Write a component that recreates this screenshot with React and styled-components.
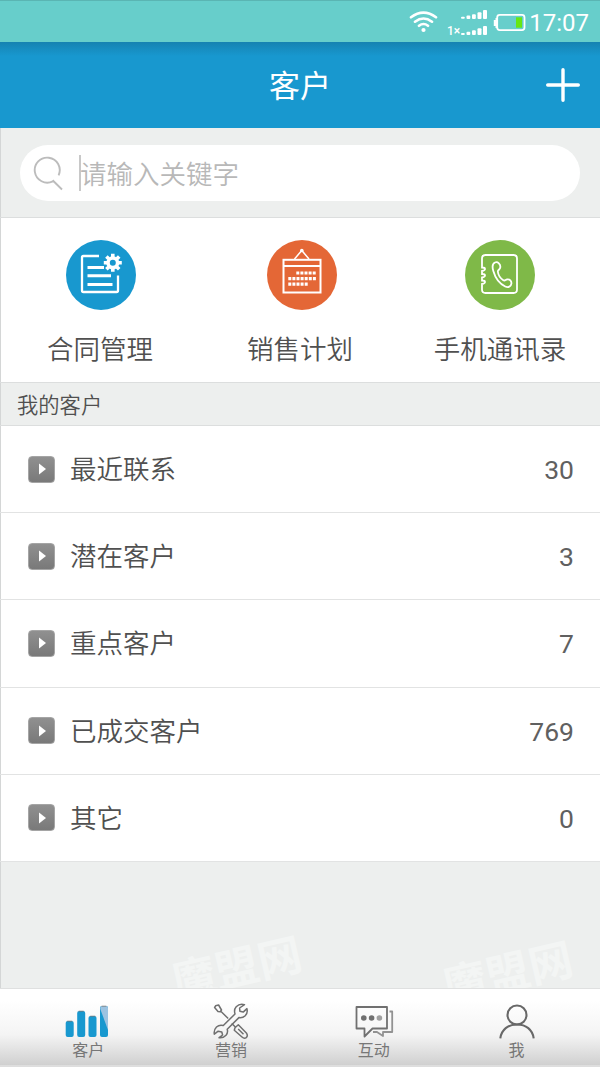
import styled, { createGlobalStyle } from 'styled-components'

const actions = [
  { label: '合同管理', color: '#1898cf', shift: 1, icon: <ContractIcon /> },
  { label: '销售计划', color: '#e46736', shift: 2, icon: <PlanIcon /> },
  { label: '手机通讯录', color: '#7fb948', shift: 0, icon: <ContactsIcon /> },
]

const groups = [
  { label: '最近联系', count: 30 },
  { label: '潜在客户', count: 3 },
  { label: '重点客户', count: 7 },
  { label: '已成交客户', count: 769 },
  { label: '其它', count: 0 },
]

const tabs = [
  { label: '客户', icon: <BarsIcon /> },
  { label: '营销', icon: <ToolsIcon /> },
  { label: '互动', icon: <ChatIcon /> },
  { label: '我', icon: <PersonIcon /> },
]

function ContractIcon() {
  return (
    <svg width="70" height="70" viewBox="0 0 70 70" fill="none" stroke="#fff" strokeWidth="2.3">
      <path d="M33 16H17.5Q16 16 16 17.5V50.5Q16 52 17.5 52H50.5Q52 52 52 50.5V35.5" />
      <path d="M21.5 27.5H38M21.5 35.7H45M21.5 44.5H46.5" strokeWidth="3" />
      <circle cx="46.8" cy="22.8" r="4.8" strokeWidth="3.6" />
      <path
        d="M46.8 13.8V17M46.8 28.6V31.8M37.8 22.8H41M52.6 22.8H55.8M40.4 16.4L42.7 18.7M50.9 26.9L53.2 29.2M53.2 16.4L50.9 18.7M42.7 26.9L40.4 29.2"
        strokeWidth="3.6"
      />
    </svg>
  )
}

function PlanIcon() {
  return (
    <svg width="70" height="70" viewBox="0 0 70 70" fill="none" stroke="#fff" strokeWidth="2">
      <rect x="16.5" y="19.8" width="37" height="32.7" />
      <path d="M16.5 26H53.5" />
      <path d="M27.5 19L34.8 10.5L42 19" strokeWidth="1.5" />
      <circle cx="34.8" cy="10.5" r="1.8" fill="#fff" stroke="none" />
      <path d="M29.3 33H49M21.3 38.7H49M21.3 44.2H41" strokeWidth="3.2" strokeDasharray="3 1.1" />
    </svg>
  )
}

function ContactsIcon() {
  return (
    <svg width="70" height="70" viewBox="0 0 70 70" fill="none" stroke="#fff" strokeWidth="1.8" strokeLinecap="round">
      <path d="M17 24.5V18.5Q17 15 20.5 15H48.5Q52 15 52 18.5V49.5Q52 53 48.5 53H20.5Q17 53 17 49.5V44Q20 43.5 20 42Q20 40.5 17 40.5V37.5Q20 37 20 35.5Q20 34 17 34V31Q20 30.5 20 29Q20 27.5 17 27.5Z" />
      <path d="M30 22.5C27.7 23.5 27 26.8 28.4 31.3C30.2 37.6 34.5 43.7 40.2 46.5C43.4 48 46 46.4 46.4 43.6C46.7 41.1 44.7 38.8 42.2 39.4C40.4 39.8 40 41.2 38.3 40.2C35.3 38.3 33.2 34.6 32.8 31.5C32.7 30 35 29.5 35.3 27.3C35.7 24.2 32.8 21.3 30 22.5Z" />
    </svg>
  )
}

function BarsIcon() {
  return (
    <svg width="46" height="36" viewBox="0 -1 46 36" fill="#1898cf">
      <rect x="0.7" y="17" width="8" height="16" rx="2" />
      <rect x="12.2" y="7" width="8" height="26" rx="2" />
      <rect x="23.5" y="12" width="8" height="21" rx="2" />
      <rect x="35" y="2" width="8" height="31" rx="2" />
      <path d="M36.8 2H41.3Q43 2 43 4V26L35.3 5Q35 2 36.8 2Z" fill="#9cc3e1" />
      <path d="M2.2 17.2H7.2M13.7 7.2H18.7M25.2 12.2H30.2M36.6 2.2H41.3" stroke="#777" strokeWidth=".8" />
    </svg>
  )
}

function ToolsIcon() {
  return (
    <svg width="36" height="36" viewBox="0 0 36 36" fill="none" stroke="#707070" strokeWidth="1.5" strokeLinejoin="round">
      <path d="M2.6 2.8L5.6 2L8.5 7L7.2 8.8L5 8.5L1.6 4.5ZM7.8 8.2L15.2 15.5" />
      <path d="M18.7 20.5L22.1 23.8M22 24.7L25.3 21.8L33.6 30.3Q35.2 33 33.2 34.6Q31.2 36 29 34L21.3 27.3ZM25.2 26L30.5 31.3" />
      <path d="M31.5 1.7Q26.7 .2 23.2 3.7Q20.7 6.5 22 11L10.3 22.5Q6.5 21.3 3.5 24Q.6 26.9 1.3 31.2L5.2 28.2L8.8 29L9.6 32L6.1 34.7Q10.3 35.3 13 32.3Q15.3 29.6 14.2 26.2L25.9 14.6Q29.6 15.2 32.2 12.7Q35.1 9.7 33.9 5.6L30.2 9.1L26.9 8.3L26.6 5Z" />
    </svg>
  )
}

function ChatIcon() {
  return (
    <svg width="40" height="36" viewBox="0 0 40 36" fill="none" stroke="#707070" strokeWidth="1.8" strokeLinejoin="round">
      <path d="M2.5 4H33V25.5H18.5L10.5 33.5V25.5H2.5Z" />
      <path d="M35.5 8.5H38.2V29H29V33L23 29H19" stroke="#929292" />
      <g fill="#707070" stroke="none">
        <circle cx="9.8" cy="15" r="2.8" />
        <circle cx="17.6" cy="15" r="2.8" />
        <circle cx="25.4" cy="15" r="2.8" opacity=".65" />
      </g>
    </svg>
  )
}

function PersonIcon() {
  return (
    <svg width="36" height="36" viewBox="0 0 36 36" fill="none" stroke="#686868" strokeWidth="2.1">
      <circle cx="18" cy="12" r="9.5" />
      <path d="M1.3 35.3C2.5 26.5 9 21.5 18 21.5S33.5 26.5 34.7 35.3" />
    </svg>
  )
}

function StatusIcons() {
  return (
    <svg width="118" height="30" viewBox="408 8 118 30" fill="none" stroke="#fff">
      <g strokeWidth="2.6" strokeLinecap="round">
        <path d="M411 17.3Q423.5 8 436 17.3M415 21.7Q423.5 15.3 432 21.7M419 25.8Q423.5 22.2 428 25.8" />
      </g>
      <g fill="#fff" stroke="none">
        <circle cx="423.5" cy="30" r="2.1" />
        <rect x="461" y="16.8" width="3.8" height="2" rx="1" />
        <rect x="466.5" y="15.5" width="3.8" height="3.5" rx="1" />
        <rect x="472" y="14.2" width="3.8" height="4.8" rx="1" />
        <rect x="477.5" y="12.3" width="4" height="6.7" rx="1" />
        <rect x="483" y="10" width="4" height="9" rx="1" />
        <rect x="461" y="33" width="3.8" height="2" rx="1" />
        <rect x="466.5" y="31.7" width="3.8" height="3.3" rx="1" />
        <rect x="472" y="30.2" width="3.8" height="4.8" rx="1" />
        <rect x="477.5" y="28.3" width="4" height="6.7" rx="1" />
        <rect x="483" y="26" width="4" height="9" rx="1" />
        <path d="M497 18H495.5V20H493.8V26H495.5V28H497Z" />
      </g>
      <rect x="497.2" y="14.9" width="27.3" height="15.2" rx="2.5" strokeWidth="1.8" />
      <rect x="516" y="17.3" width="6" height="10.4" fill="#67e712" stroke="none" />
    </svg>
  )
}

function App() {
  return (
    <Screen>
      <GlobalStyle />
      <StatusBar>
        <StatusIcons />
        <Network>1×</Network>
        <Time>17:07</Time>
      </StatusBar>
      <Header>
        <Title>客户</Title>
        <AddButton aria-label="添加">
          <svg width="34" height="34" viewBox="0 0 34 34" stroke="#fff" strokeWidth="3.4" strokeLinecap="round">
            <path d="M17 1.7V32.3M1.7 17H32.3" />
          </svg>
        </AddButton>
      </Header>
      <SearchArea>
        <SearchBox>
          <svg width="30" height="36" viewBox="0 0 30 36" fill="none" stroke="#bcbcbc" strokeWidth="1.9">
            <path d="M19.8 26.3A12.5 12.5 0 1 1 25.6 20.3M19.6 25.3L29 34.5" />
          </svg>
          <Caret />
          <Placeholder>请输入关键字</Placeholder>
        </SearchBox>
      </SearchArea>
      <Actions>
        {actions.map((item) => (
          <Action key={item.label}>
            <Disc color={item.color} $shift={item.shift}>{item.icon}</Disc>
            <ActionLabel>{item.label}</ActionLabel>
          </Action>
        ))}
      </Actions>
      <SectionTitle>我的客户</SectionTitle>
      <List>
        {groups.map((item) => (
          <Row key={item.label}>
            <Toggle>
              <svg width="9" height="12" viewBox="0 0 9 12">
                <path d="M1 .5L8 6L1 11.5Z" fill="#fff" />
              </svg>
            </Toggle>
            <RowLabel>{item.label}</RowLabel>
            <Count>{item.count}</Count>
          </Row>
        ))}
      </List>
      <Filler>
        <Watermark $left={170} $top={73}>魔盟网</Watermark>
        <Watermark $left={441} $top={78}>魔盟网</Watermark>
      </Filler>
      <TabBar>
        {tabs.map((item) => (
          <Tab key={item.label}>
            {item.icon}
            <TabLabel>{item.label}</TabLabel>
          </Tab>
        ))}
      </TabBar>
    </Screen>
  )
}

export default App

const GlobalStyle = createGlobalStyle`
  * {
    box-sizing: border-box;
  }

  body {
    margin: 0;
    background: #edefee;
    font-family: "Noto Sans CJK SC", sans-serif;
    font-weight: 350;
    color: #505050;
  }

  svg {
    display: block;
    flex-shrink: 0;
  }
`

const Screen = styled.div`
  width: 600px;
  height: 1067px;
  display: flex;
  flex-direction: column;
  overflow: hidden;
  background: #edefee;
  box-shadow: inset 1px 0 #d4d6d6;
`

const StatusBar = styled.div`
  height: 42px;
  flex-shrink: 0;
  display: flex;
  align-items: center;
  justify-content: flex-end;
  padding: 3px 11px 0 0;
  background: #67cecb;
  border-top: 1px solid #5ab5b3;
  color: #fff;
  position: relative;
`

const Network = styled.span`
  position: absolute;
  left: 447px;
  top: 22px;
  font: 500 12px/16px Roboto, sans-serif;
`

const Time = styled.span`
  width: 60px;
  margin-left: 3px;
  font: 400 24px/34px Roboto, sans-serif;
  text-align: right;
`

const Header = styled.header`
  height: 86px;
  flex-shrink: 0;
  display: grid;
  grid-template-columns: 1fr auto 1fr;
  align-items: center;
  padding-right: 20px;
  padding-left: 20px;
  color: #fff;
  background: linear-gradient(#1682b1, #1898cf 14px);
`

const Title = styled.h1`
  grid-column: 2;
  margin: 0 0 3px;
  font-size: 31px;
  line-height: 40px;
  font-weight: 400;
`

const AddButton = styled.button`
  justify-self: end;
  padding: 0;
  border: 0;
  background: none;
`

const SearchArea = styled.div`
  height: 90px;
  flex-shrink: 0;
  padding: 17px 20px;
  border-bottom: 1px solid #dcdede;
`

const SearchBox = styled.div`
  height: 56px;
  display: flex;
  align-items: center;
  padding-left: 13px;
  border-radius: 28px;
  background: #fff;
`

const Caret = styled.div`
  width: 2px;
  height: 36px;
  margin-left: 16px;
  background: #c8c8c8;
`

const Placeholder = styled.span`
  margin-left: -1px;
  padding-bottom: 2px;
  font-size: 26.5px;
  color: #b8b8b8;
`

const Actions = styled.div`
  height: 164px;
  flex-shrink: 0;
  display: grid;
  grid-template-columns: 200px 200px 200px;
  background: #fff;
  box-shadow: inset 1px 0 #d4d6d6;
`

const Action = styled.div`
  display: flex;
  flex-direction: column;
  align-items: center;
  padding-top: 22px;
`

const Disc = styled.div`
  width: 70px;
  height: 70px;
  margin-left: ${(props) => props.$shift * 2}px;
  border-radius: 50%;
  background: ${(props) => props.color};
`

const ActionLabel = styled.span`
  margin-top: 18px;
  font-size: 26.5px;
  line-height: 40px;
`

const SectionTitle = styled.h2`
  height: 44px;
  flex-shrink: 0;
  margin: 0;
  padding-left: 17px;
  border-top: 1px solid #dcdede;
  border-bottom: 1px solid #dcdede;
  font-size: 21.3px;
  line-height: 41px;
  font-weight: 350;
`

const List = styled.div`
  height: 436px;
  flex-shrink: 0;
  display: grid;
  grid-template-rows: repeat(5, 1fr);
  background: #fff;
  box-shadow: inset 1px 0 #d4d6d6;
`

const Row = styled.div`
  display: flex;
  align-items: center;
  padding: 0 26px 0 28px;
  border-bottom: 1px solid #e2e3e3;
`

const Toggle = styled.div`
  width: 27px;
  height: 27px;
  display: flex;
  align-items: center;
  justify-content: center;
  padding-left: 1px;
  border: 1px solid #a5a5a5;
  border-radius: 4px;
  background: linear-gradient(#909090, #797979);
`

const RowLabel = styled.span`
  flex: 1;
  margin-left: 15px;
  padding-bottom: 2px;
  font-size: 26.5px;
  line-height: 40px;
`

const Count = styled.span`
  padding-top: 2px;
  font: 400 26.5px/34px Roboto, sans-serif;
  color: #606060;
`

const Filler = styled.div`
  flex: 1;
  position: relative;
`

const Watermark = styled.span`
  position: absolute;
  left: ${(props) => props.$left}px;
  top: ${(props) => props.$top}px;
  font-size: 44px;
  font-weight: 700;
  line-height: 60px;
  color: #f3f5f4;
  transform: rotate(-13deg);
`

const TabBar = styled.nav`
  height: 79px;
  flex-shrink: 0;
  position: relative;
  display: grid;
  grid-template-columns: repeat(4, 1fr);
  padding: 0 12px 0 17px;
  border-top: 1px solid #dfe0e0;
  border-bottom: 2px solid #dedede;
  background: linear-gradient(#fff 15%, #f4f4f4 60%, #d0d0d0);
`

const Tab = styled.div`
  display: flex;
  flex-direction: column;
  align-items: center;
  padding-top: 14px;
`

const TabLabel = styled.span`
  font-size: 16px;
  font-weight: 400;
  line-height: 20px;
  color: #777;
`
